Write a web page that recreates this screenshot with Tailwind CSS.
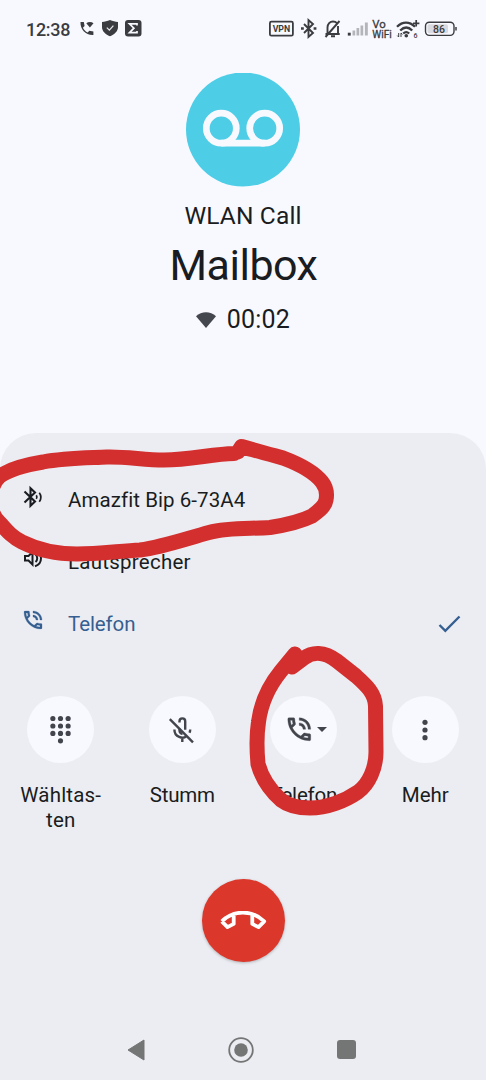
<!DOCTYPE html>
<html lang="de">
<head>
<meta charset="utf-8">
<title>WLAN Call</title>
<script src="https://cdn.jsdelivr.net/npm/@tailwindcss/browser@4"></script>
</head>
<body class="bg-[#f8f9ff]">
<svg class="hidden">
  <symbol id="talk" viewBox="0 0 24 24"><path fill="currentColor" stroke="currentColor" stroke-width=".25" d="M15 12h2c0-2.76-2.24-5-5-5v2c1.66 0 3 1.34 3 3zM19 12h2c0-4.97-4.03-9-9-9v2c3.87 0 7 3.13 7 7zM20 15.5c-1.25 0-2.45-.2-3.57-.57-.1-.03-.21-.05-.31-.05-.26 0-.51.1-.71.29l-2.2 2.2c-2.83-1.44-5.15-3.75-6.59-6.59l2.2-2.21c.28-.26.36-.65.25-1C8.700 6.450 8.500 5.250 8.500 4c0-.55-.45-1-1-1H4c-.55 0-1 .45-1 1 0 9.390 7.610 17 17 17 .55 0 1-.45 1-1v-3.500c0-.55-.45-1-1-1zM5.030 5h1.500c.07.88.22 1.750.45 2.580l-1.200 1.210C5.380 7.580 5.120 6.320 5.030 5zM19 18.970c-1.320-.09-2.590-.35-3.800-.75l1.200-1.200c.85.24 1.710.39 2.600.45v1.500z"/></symbol>
</svg>
<div class="relative flex h-[1080px] w-[486px] flex-col overflow-hidden font-[Roboto,'Noto_Sans',sans-serif] text-[#191c20]">
  <header class="flex h-[57px] items-center pl-[26px] pr-[28px] text-[#3b3c40]">
    <span class="w-[54px] whitespace-nowrap pt-[2px] text-[18px] font-medium tracking-[-0.300px]">12:38</span>
    <svg class="h-[20px] w-[64px] -translate-y-px" viewBox="80 18 64 20" fill="#3b3c40">
      <path d="M80.500 22h3.300l.8 4-1.700 1.700c1.100 2.200 2.600 3.700 4.800 4.800l1.600-1.700 4.100.8v3.300c-7.400.5-13.400-5.500-12.900-12.900z"/>
      <path d="M86.300 23.200c2-1.700 5.200-1.700 7.200 0l-3.600 4.400z"/>
      <path d="M110 20c2.700 1.200 5.300 1.800 8 2v5c0 4-3 7.200-8 9.200-5-2-8-5.200-8-9.200v-5c2.700-.2 5.300-.8 8-2z"/>
      <path d="M106.800 27.600l2.600 2.500 4-4.500" fill="none" stroke="#e4e5ea" stroke-width="1.300"/>
      <rect x="125" y="20" width="16.500" height="16.500" rx="3"/>
      <path d="M137 25.500v-1.600h-7.500l4.400 4.300-4.400 4.400h7.500V31" fill="none" stroke="#f8f9ff" stroke-width="1.700"/>
    </svg>
    <svg class="ml-auto h-[22px] w-[190px] -translate-y-[0.5px]" viewBox="268 17 190 22" fill="none" stroke="#3b3c40">
      <rect x="269.900" y="21.200" width="23" height="14" rx="1.500" stroke-width="1.800"/>
      <text x="281.400" y="31.800" font-size="9.500" font-weight="700" text-anchor="middle" textLength="17.500" lengthAdjust="spacingAndGlyphs" fill="#3b3c40" stroke="none">VPN</text>
      <path d="M304 23.500l9 9-4.500 4v-17l4.500 4-9 9" stroke-width="1.900"/><path d="M301 28h2.800M313.600 28h2.800" stroke-width="2.600"/>
      <path d="M325.500 33.500h14.200M327.500 33v-6c0-3.500 2.500-6 5.500-6 1.700 0 3.100.7 4 1.700M338 25.500v7.500M331 35.800h4M325.500 36.500l14-16" stroke-width="1.900"/>
      <g stroke="none" fill="#b4b5bb"><rect x="352.500" y="30" width="2.700" height="5"/><rect x="356.500" y="27.500" width="2.700" height="7.500"/><rect x="360.500" y="25" width="2.700" height="10"/><rect x="364.900" y="22" width="2.900" height="13"/></g>
      <rect x="347.800" y="32.200" width="2.900" height="2.900" fill="#3b3c40" stroke="none"/>
      <g fill="#3b3c40" stroke="#3b3c40" stroke-width=".3"><text x="372.300" y="27" font-size="10.500" textLength="13.500" lengthAdjust="spacingAndGlyphs">Vo</text><text x="372.300" y="37" font-size="10" textLength="19.500" lengthAdjust="spacingAndGlyphs">WiFi</text></g>
      <path d="M397 26.300c5.500-5.500 12.500-5.500 18 0M400.200 30c4-4 8-4 12 0M403.200 33c2-1.800 4-1.800 6 0" stroke-width="2.300"/>
      <circle cx="406.300" cy="35.200" r="1.800" fill="#3b3c40" stroke="none"/>
      <path d="M413 22.800h6.400M416.200 19.600v6.400" stroke-width="1.700"/>
      <path d="M398.700 32.500v4l-1.400-1.400M401 36.500v-4l1.400 1.400" stroke-width="1"/>
      <text x="413.500" y="37" font-size="7" font-weight="500" fill="#3b3c40" stroke="none">6</text>
      <rect x="425.500" y="21.700" width="28.500" height="13.200" rx="3.800" stroke-width="1.400"/>
      <rect x="427.500" y="23.800" width="20.500" height="9" rx="1.800" fill="#d9dae0" stroke="none"/>
      <path d="M456 26.500v3.500" stroke-width="1.500"/>
      <text x="439" y="32.200" font-size="10.500" font-weight="500" text-anchor="middle" fill="#3b3c40" stroke="none">86</text>
    </svg>
  </header>

  <section class="flex h-[376px] flex-col items-center pt-[15.500px]">
    <svg class="h-[114px] w-[114px] shrink-0" viewBox="186 73 114 114">
      <circle cx="243" cy="129.500" r="57" fill="#4dcde6"/>
      <g fill="none" stroke="#f8f9ff" stroke-width="6.700"><circle cx="221.300" cy="128.200" r="15"/><circle cx="264.700" cy="128.200" r="15"/><path d="M221.300 143.200h43.400"/></g>
    </svg>
    <div class="mt-[13px] h-[32px] whitespace-nowrap text-[24.500px] leading-[32px] tracking-[0.150px]">WLAN Call</div>
    <h1 class="mt-[6px] h-[54px] whitespace-nowrap pl-[1px] text-[43px] leading-[54px] tracking-[-0.500px]">Mailbox</h1>
    <div class="mt-[12px] flex h-[32px] items-center gap-[11px]">
      <svg class="h-[16px] w-[20px]" viewBox="0 0 20 16"><path d="M0 4.200C5.500-1 14.500-1 20 4.200L10 16z" fill="#45474e"/></svg>
      <span class="text-[25px] leading-[32px] tracking-[0.200px]">00:02</span>
    </div>
  </section>

  <main class="flex flex-1 flex-col rounded-t-[36px] bg-[#ecedf2] pt-[36px]">
    <ul class="text-[20.500px]">
      <li class="flex h-[62px] items-center gap-[23px] pl-[21px]">
        <svg class="mb-[7px] h-6 w-6 shrink-0" viewBox="0 0 24 24" fill="none" stroke="#191c20"><path d="M3.500 6.500l10.500 10-4.500 4.300v-17.600l4.500 4.300-10.500 10" stroke-width="2.100"/><path d="M15.300 10.200c.8 1.200.8 2.500 0 3.700M18.300 7.700c2 2.800 2 6.300 0 9" stroke-width="1.700"/></svg>
        <span class="whitespace-nowrap tracking-[0.070px]">Amazfit Bip 6-73A4</span>
      </li>
      <li class="flex h-[62px] items-center gap-[23px] pl-[21px]">
        <svg class="mb-[9px] h-6 w-6" viewBox="0 0 24 24" fill="none" stroke="#191c20" stroke-width="2"><path d="M4 10v4.500h3.500l4 4V6l-4 4zM14.500 8.500c2.300 1.700 2.300 5.800 0 7.500M14 4.300c8 2.500 8 13.400 0 16"/></svg>
        <span class="tracking-[0.250px]">Lautsprecher</span>
      </li>
      <li class="flex h-[62px] items-center gap-[23px] pl-[21px] pr-[25px] text-[#365f91]">
        <svg class="mb-[8px] h-6 w-6"><use href="#talk"/></svg>
        <span class="tracking-[-0.100px]">Telefon</span>
        <svg class="ml-auto h-[20px] w-[24px]" viewBox="0 0 24 20" fill="none" stroke="#365f91" stroke-width="2.400"><path d="M2.500 11l5.800 5.800L22.500 2.500"/></svg>
      </li>
    </ul>

    <div class="mt-[41px] grid h-[183px] grid-cols-4 text-center text-[20.500px] leading-[25px]">
      <div class="flex flex-col items-center">
        <div class="flex h-[67px] w-[67px] items-center justify-center rounded-full bg-[#f8f9ff]">
          <svg class="h-[29px] w-[21px]" viewBox="0 0 22 30" fill="#42454c"><circle cx="3" cy="3.500" r="2.700"/><circle cx="11" cy="3.500" r="2.700"/><circle cx="19" cy="3.500" r="2.700"/><circle cx="3" cy="11.300" r="2.700"/><circle cx="11" cy="11.300" r="2.700"/><circle cx="19" cy="11.300" r="2.700"/><circle cx="3" cy="19.100" r="2.700"/><circle cx="11" cy="19.100" r="2.700"/><circle cx="19" cy="19.100" r="2.700"/><circle cx="11" cy="26.900" r="2.700"/></svg>
        </div>
        <div class="mt-[20px] whitespace-nowrap tracking-[0.200px]">Wähltas-<br>ten</div>
      </div>
      <div class="flex flex-col items-center">
        <div class="flex h-[67px] w-[67px] items-center justify-center rounded-full bg-[#f8f9ff]">
          <svg class="h-[30px] w-[30px]" viewBox="167 715 30 30" fill="none" stroke="#42454c" stroke-width="2.400"><path d="M169.800 719.200l23.200 23.200"/><path d="M179.500 722.500v-1.200c0-3.900 5.700-3.900 5.700 0v8.500M179.500 728.500v2c0 2 1.500 3.200 3 3.200M174.400 729.500c0 8 8.800 9.700 12 6.700M190.200 729.500c0 1.200-.2 2.200-.7 3.200M182.300 737v5"/></svg>
        </div>
        <div class="mt-[20px] tracking-[-0.200px]">Stumm</div>
      </div>
      <div class="flex flex-col items-center">
        <div class="flex h-[67px] w-[67px] items-center justify-center rounded-full bg-[#f8f9ff] pl-[3px] text-[#42454c]">
          <svg class="h-[30.500px] w-[30.500px]"><use href="#talk"/></svg>
          <svg class="ml-[2px] h-[5px] w-[10px]" viewBox="0 0 10 5"><path d="M0 0h10L5 5z" fill="#42454c"/></svg>
        </div>
        <div class="mt-[20px] tracking-[-0.200px]">Telefon</div>
      </div>
      <div class="flex flex-col items-center">
        <div class="flex h-[67px] w-[67px] items-center justify-center rounded-full bg-[#f8f9ff]">
          <svg class="h-[22px] w-[6px]" viewBox="0 0 6 22" fill="#42454c"><circle cx="3" cy="3.300" r="2.600"/><circle cx="3" cy="11" r="2.600"/><circle cx="3" cy="18.700" r="2.600"/></svg>
        </div>
        <div class="mt-[20px]">Mehr</div>
      </div>
    </div>

    <div class="mx-auto flex h-[83px] w-[83px] shrink-0 items-center justify-center rounded-full bg-[#db372b] shadow-[0_1px_3px_rgba(0,0,0,0.25)]">
      <svg class="h-[20px] w-[48px]" viewBox="219 911 48 20" fill="none" stroke="#fff" stroke-width="3.800" stroke-linejoin="round"><path d="M221.800 921.300c12-11.600 30.400-11.600 42.400 0l-5.700 5.800-6.200-3.200v-9.200M221.800 921.300l5.700 5.800 6.200-3.200v-9.200"/></svg>
    </div>

    <nav class="mt-auto flex h-[61px] items-center pl-[127px] text-[#747575]">
      <svg class="h-[22px] w-[18px]" viewBox="0 0 18 22" fill="currentColor" stroke="currentColor" stroke-linejoin="round"><path d="M1 11L17 1v20z"/></svg>
      <svg class="ml-[83px] h-[26px] w-[26px]" viewBox="0 0 26 26"><circle cx="13" cy="13" r="11.800" fill="none" stroke="currentColor" stroke-width="1.800"/><circle cx="13" cy="13" r="6.800" fill="currentColor"/></svg>
      <div class="ml-[83px] h-[19px] w-[19px] rounded-[3px] bg-[#747575]"></div>
    </nav>
  </main>

  <svg class="pointer-events-none absolute inset-0 h-[1080px] w-[486px]" viewBox="0 0 486 1080" fill="none" stroke="#d32f2f" stroke-width="15" stroke-linecap="round" stroke-linejoin="round">
    <path d="M234 453.500C212 454 190 460 164 460C144 460 127 456.500 107 457C86 458 64 458 43 462C28 464.500 10 469 0 476C-13 488 -12 513 0 523C7 531 12 537 22 542C40 551 58 554 77 554C98 554 120 551 140 550C163 547 185 539 209 532.500C229 527 250 529 270 527.500C286 525 302 521 312 516C320 510 325 506 326 500C327.500 492 326 487 322 482C315 473 299 464 283 458C270 454 256 451 241.500 446.500L238 452"/>
    <path d="M295 654L281 671C268 687 261 702 258.500 722C256 738 257 753 258 764C262 779 271 791 281 800C290 807 301 808 310 808C327 808 345 801 358 792C369 784 376 768 376 752L375.500 706C375 693 366 685 356 676L337 661C324 651 312 652 304 658L292 667"/>
  </svg>
</div>
</body>
</html>
